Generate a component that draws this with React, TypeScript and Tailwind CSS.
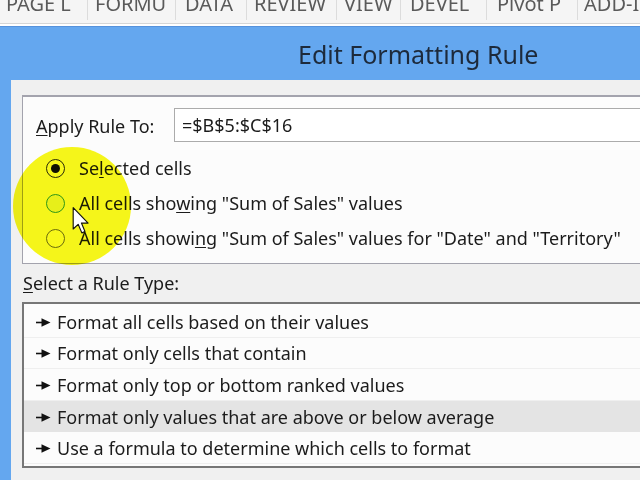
const tabs = [
  { label: "PAGE L", w: "w-[88px]", pl: "pl-[6px]" },
  { label: "FORMU", w: "w-[88px]", pl: "pl-[7px]" },
  { label: "DATA", w: "w-[71px]", pl: "pl-[9px]" },
  { label: "REVIEW", w: "w-[90px]", pl: "pl-[7px]" },
  { label: "VIEW", w: "w-[64px]", pl: "pl-[7px]" },
  { label: "DEVEL", w: "w-[86px]", pl: "pl-[9px]" },
  { label: "Pivot P", w: "w-[91px]", pl: "pl-[10px]" },
  { label: "ADD-INS", w: "w-[80px]", pl: "pl-[6px]" },
];

const ruleTypes = [
  "Format all cells based on their values",
  "Format only cells that contain",
  "Format only top or bottom ranked values",
  "Format only values that are above or below average",
  "Use a formula to determine which cells to format",
];

function Pointer() {
  return (
    <svg width="15" height="9" viewBox="0 0 15 9" className="shrink-0">
      <line x1="0" y1="4.5" x2="7" y2="4.5" stroke="#111" strokeWidth="1.6" />
      <polygon points="5.5,0.3 14.5,4.5 5.5,8.7" fill="#111" />
    </svg>
  );
}

function Radio({ state }: { state: "checked" | "hover" | "off" }) {
  if (state === "checked") {
    return (
      <span className="flex h-[19px] w-[19px] shrink-0 items-center justify-center rounded-full border-[1.5px] border-[#2b2b2b] bg-white">
        <span className="h-[9px] w-[9px] rounded-full bg-[#111]" />
      </span>
    );
  }
  if (state === "hover") {
    return (
      <span className="h-[19px] w-[19px] shrink-0 rounded-full border-[1.5px] border-[#2f9bd8] bg-[#eef6fd]" />
    );
  }
  return (
    <span className="h-[19px] w-[19px] shrink-0 rounded-full border-[1.5px] border-[#6d6d6d] bg-white" />
  );
}

export default function App() {
  return (
    <div
      className="relative flex h-[480px] w-[640px] flex-col overflow-hidden bg-white text-[#1b1b1b]"
      style={{ fontFamily: '"Noto Sans", "Open Sans", Arial, sans-serif' }}
    >
      {/* ribbon tabs, cut at the top */}
      <div className="flex h-[24px] shrink-0 items-start overflow-hidden border-b border-[#d6d6d6] bg-[#f5f5f5]">
        {tabs.map((t, i) => (
          <div
            key={t.label}
            className={`flex h-[20px] shrink-0 items-start ${t.w} ${t.pl} ${
              i < tabs.length - 1 ? "border-r border-[#dcdcdc]" : ""
            }`}
          >
            <span className="-mt-[10px] block text-[20px] leading-[28px] whitespace-nowrap text-[#5a5a5a]">
              {t.label}
            </span>
          </div>
        ))}
      </div>
      <div className="h-[2px] shrink-0 bg-white" />

      {/* dialog window */}
      <div className="flex flex-1 flex-col border-t border-[#5592dc] bg-[#64a7ef] pl-[11px]">
        <div className="flex h-[53px] shrink-0 items-center pt-[2px] pl-[287px]">
          <span className="text-[25px] whitespace-nowrap text-[#1d2a3b]">
            Edit Formatting Rule
          </span>
        </div>

        <div className="flex flex-1 flex-col bg-[#f0f0f0] pt-[15px] pl-[11px]">
          {/* apply rule to group */}
          <div className="-mr-[40px] flex h-[169px] shrink-0 flex-col border border-t-2 border-[#a3a3ad] bg-[#fcfcfc] pt-[11px] pl-[13px]">
            <div className="flex h-[34px] items-center">
              <span className="w-[138px] pt-[2px] text-[18px] whitespace-nowrap">
                <u className="underline-offset-2">A</u>pply Rule To:
              </span>
              <div className="flex h-[34px] flex-1 items-center border border-[#ababab] bg-white pt-[1px] pl-[7px] text-[18px]">
                =$B$5:$C$16
              </div>
            </div>
            <div className="mt-[9px] flex flex-col pl-[10px]">
              <div className="flex h-[35px] items-center gap-[14px]">
                <Radio state="checked" />
                <span className="text-[18px] whitespace-nowrap">
                  Se<u className="underline-offset-2">l</u>ected cells
                </span>
              </div>
              <div className="flex h-[35px] items-center gap-[14px]">
                <Radio state="hover" />
                <span className="text-[18px] whitespace-nowrap">
                  All cells sho<u className="underline-offset-2">w</u>ing "Sum of Sales" values
                </span>
              </div>
              <div className="flex h-[35px] items-center gap-[14px]">
                <Radio state="off" />
                <span className="text-[18px] whitespace-nowrap">
                  All cells showi<u className="underline-offset-2">n</u>g "Sum of Sales" values for "Date" and "Territory"
                </span>
              </div>
            </div>
          </div>

          {/* rule type */}
          <div className="flex h-[38px] shrink-0 items-center pl-[1px] text-[18px]">
            <span>
              <u className="underline-offset-2">S</u>elect a Rule Type:
            </span>
          </div>
          <div className="-mr-[40px] flex h-[166px] shrink-0 flex-col border-2 border-[#777777] bg-[#fcfcfc] pt-[2px]">
            {ruleTypes.map((r, i) => (
              <div
                key={r}
                className={`flex h-[31.5px] shrink-0 items-center gap-[6px] pt-[2px] pl-[12px] ${
                  i === 3 ? "bg-[#e4e4e4]" : "border-b border-[#efefef]"
                }`}
              >
                <Pointer />
                <span className="text-[18px] whitespace-nowrap">{r}</span>
              </div>
            ))}
          </div>
        </div>
      </div>

      {/* yellow cursor highlight */}
      <div className="pointer-events-none absolute top-[147px] left-[13px] h-[118px] w-[118px] rounded-full bg-[#f8f81a] mix-blend-multiply" />

      {/* mouse cursor */}
      <svg
        className="pointer-events-none absolute top-[207px] left-[72px]"
        width="18"
        height="27"
        viewBox="0 0 12 19"
      >
        <path
          d="M0.5 0.5 L0.5 15.5 L4 12.2 L6.6 18.2 L8.8 17.2 L6.3 11.3 L11 11.3 Z"
          fill="#fff"
          stroke="#111"
          strokeWidth="0.8"
          strokeLinejoin="round"
        />
      </svg>
    </div>
  );
}
